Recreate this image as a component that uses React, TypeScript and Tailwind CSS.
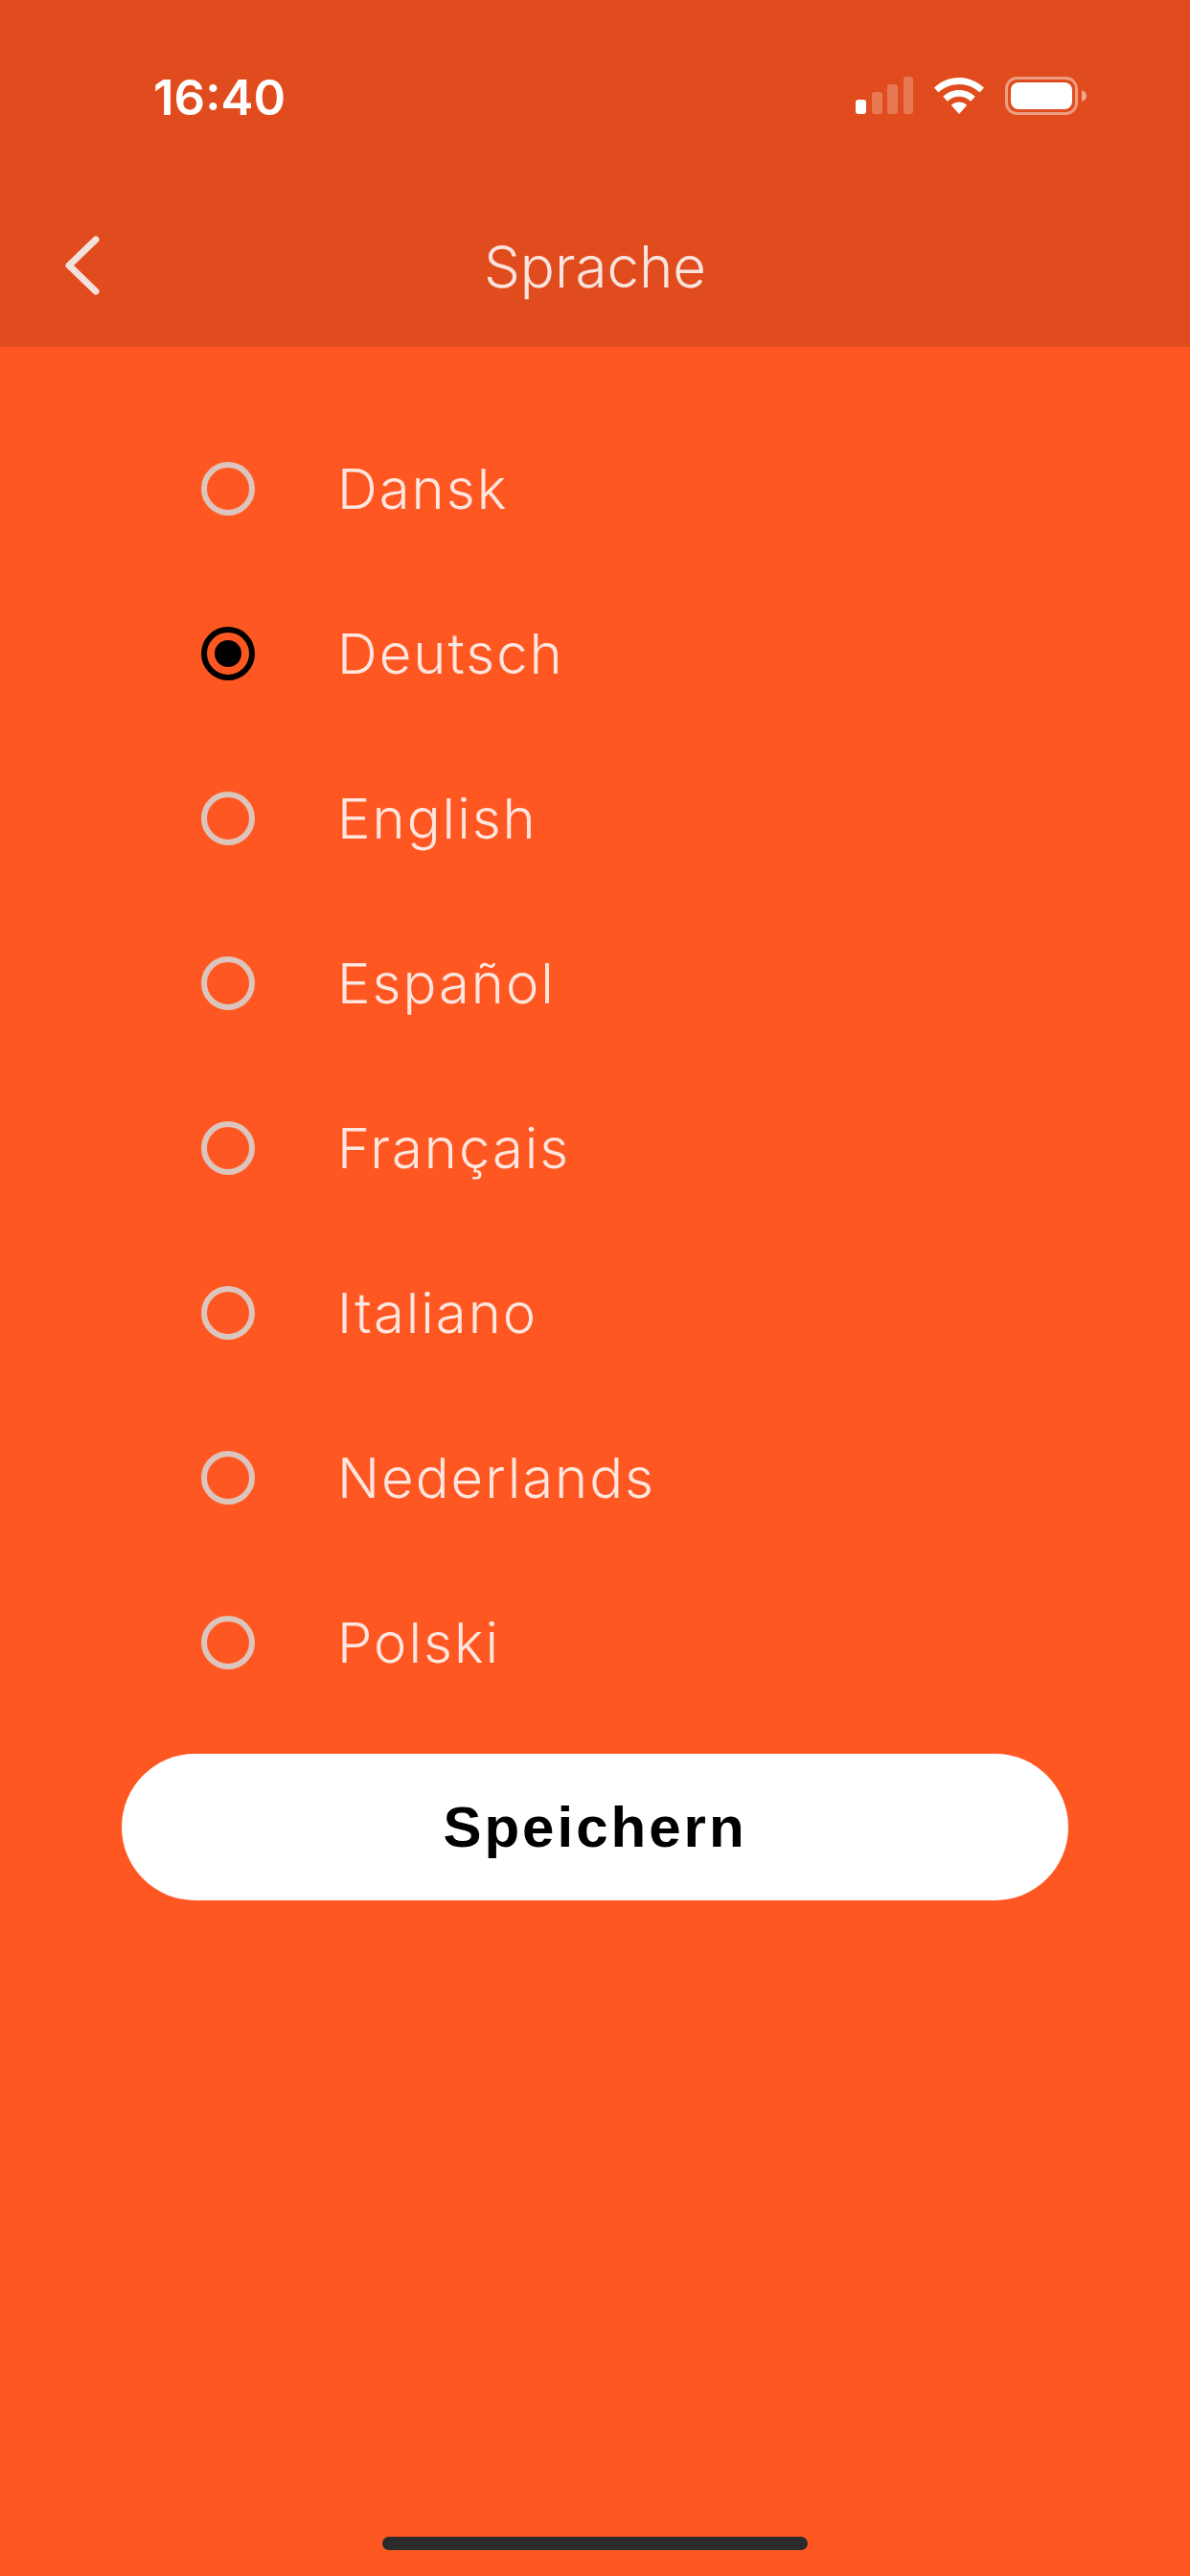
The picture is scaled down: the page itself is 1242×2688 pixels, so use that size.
const languages = ["Dansk", "Deutsch", "English", "Español", "Français", "Italiano", "Nederlands", "Polski"];
const selected = "Deutsch";

function SignalIcon() {
  return (
    <svg width="60" height="40" viewBox="0 0 60 40" fill="#fff">
      <rect x="0" y="24" width="11" height="15" rx="3" />
      <rect x="17" y="16" width="11" height="23" rx="3" fillOpacity="0.25" />
      <rect x="33" y="8" width="11" height="31" rx="3" fillOpacity="0.25" />
      <rect x="50" y="0" width="10" height="39" rx="3" fillOpacity="0.25" />
    </svg>
  );
}

function WifiIcon() {
  return (
    <svg width="52" height="38" viewBox="0 0 52 38" fill="#fff">
      <path d="M26 0C16 0 7 4 0 10.500L4.500 15.500C10 10.200 17.500 7 26 7C34.500 7 42 10.200 47.500 15.500L52 10.500C45 4 36 0 26 0Z" />
      <path d="M26 13C19.500 13 13.700 15.500 9.300 19.800L13.800 24.800C17 21.700 21.200 19.800 26 19.800C30.800 19.800 35 21.700 38.200 24.800L42.700 19.800C38.300 15.500 32.500 13 26 13Z" />
      <path d="M26 25.500C22.800 25.500 20 26.700 17.800 28.800L26 38L34.200 28.800C32 26.700 29.200 25.500 26 25.500Z" />
    </svg>
  );
}

function BatteryIcon() {
  return (
    <svg width="85" height="40" viewBox="0 0 85 40" fill="none">
      <rect x="1.500" y="1.500" width="73" height="37" rx="11" stroke="#fff" strokeOpacity="0.45" strokeWidth="3" />
      <rect x="6" y="6" width="64" height="28" rx="8" fill="#fff" />
      <path d="M80 14C83 15 85 17 85 20C85 23 83 25 80 26Z" fill="#fff" fillOpacity="0.5" />
    </svg>
  );
}

function Radio({ on }: { on: boolean }) {
  return (
    <span
      className={
        on
          ? "flex h-[56px] w-[56px] shrink-0 items-center justify-center rounded-full border-[6px] border-black"
          : "flex h-[56px] w-[56px] shrink-0 items-center justify-center rounded-full border-[6px] border-[#dcc5bd]"
      }
    >
      {on && <span className="h-[28px] w-[28px] rounded-full bg-black" />}
    </span>
  );
}

export default function App() {
  return (
    <div className="flex h-[2688px] w-[1242px] flex-col overflow-hidden bg-[#ff5722] font-['Inter',sans-serif]">
      <header className="h-[362px] shrink-0 bg-[#e04c1d]">
        <div className="flex h-[200px] items-start justify-between pl-[160px] pr-[108px] pt-[72px]">
          <span className="text-[51px] font-semibold leading-[60px] text-white">16:40</span>
          <div className="flex items-center gap-[22px] pt-[8px]">
            <SignalIcon />
            <WifiIcon />
            <BatteryIcon />
          </div>
        </div>
        <div className="relative flex h-[156px] items-center justify-center">
          <svg className="absolute left-[68px] top-[46px]" width="36" height="62" viewBox="0 0 36 62" fill="none">
            <path d="M32 4L4 31L32 58" stroke="#f3e2dc" strokeWidth="7" strokeLinecap="round" strokeLinejoin="round" />
          </svg>
          <h1 className="text-[60px] font-light leading-[72px] text-white/85">Sprache</h1>
        </div>
      </header>

      <main className="flex flex-1 flex-col">
        <ul className="flex flex-col pl-[210px] pt-[62px]">
          {languages.map((name) => (
            <li key={name} className="flex h-[172px] items-center gap-[86px]">
              <Radio on={name === selected} />
              <span className="text-[58px] font-light leading-[70px] tracking-[2px] text-white/85">{name}</span>
            </li>
          ))}
        </ul>
        <div className="px-[127px] pt-[30px]">
          <button className="flex h-[153px] w-full items-center justify-center rounded-full bg-white font-['Liberation_Sans',sans-serif] text-[60px] font-bold tracking-[3px] text-black">
            Speichern
          </button>
        </div>
      </main>

      <div className="flex h-[41px] shrink-0 justify-center">
        <span className="h-[14px] w-[444px] rounded-full bg-[#2b2b2b]" />
      </div>
    </div>
  );
}
